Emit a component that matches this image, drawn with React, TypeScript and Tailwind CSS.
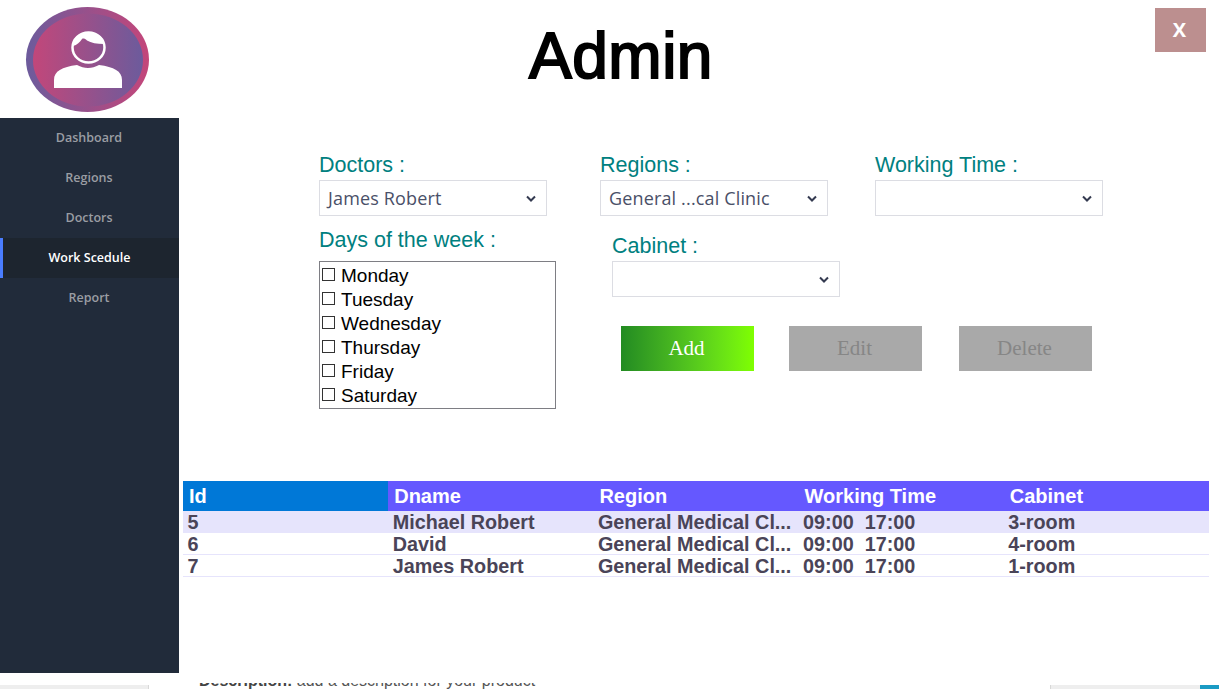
function Logo() {
    return (
        <svg width="179" height="118" viewBox="0 0 179 118" className="block">
            <defs>
                <linearGradient id="logoOuter" x1="0" x2="1" y1="0" y2="0">
                    <stop offset="0" stopColor="#6c5b9c" />
                    <stop offset="1" stopColor="#c4467a" />
                </linearGradient>
                <linearGradient id="logoInner" x1="0" x2="1" y1="0" y2="0">
                    <stop offset="0" stopColor="#c2477a" />
                    <stop offset="1" stopColor="#6c5b9c" />
                </linearGradient>
            </defs>
            <ellipse cx="87.5" cy="59.5" rx="61.5" ry="52.5" fill="url(#logoOuter)" />
            <ellipse cx="88" cy="60" rx="55" ry="46.5" fill="url(#logoInner)" />
            <ellipse cx="88.5" cy="47.5" rx="16" ry="15" fill="none" stroke="#fff" strokeWidth="2.5" />
            <path d="M73 46C73 37 80 32 88.5 32S104 37 104 44C97 44 91 43 87 40.5 85 38.5 83 38 82 39 80 42 77 45 73 46z" fill="#fff" />
            <path d="M54 88V80C54 71 62 67 77 65 81 67 84 68 88 68S95 67 99 65C114 67 122 71 122 80V88z" fill="#fff" />
        </svg>
    );
}

function Chevron() {
    return (
        <svg width="10" height="7" viewBox="0 0 10 7" className="shrink-0">
            <path d="M1 1.5 5 5.5 9 1.5" fill="none" stroke="#343a50" strokeWidth="2" />
        </svg>
    );
}

function Field({ label, value }: { label: string; value?: string }) {
    return (
        <div className="w-[228px]">
            <div className="h-[27px] text-[21.5px] leading-[24px] text-[#008080] font-['Liberation_Sans',sans-serif] whitespace-nowrap">
                {label}
            </div>
            <div className="h-[36px] border border-[#dcdde3] bg-white pl-[8px] pr-[10px] flex items-center justify-between">
                <span className="text-[18px] text-[#4a5068] font-['Open_Sans',sans-serif] tracking-[0.15px]">
                    {value}
                </span>
                <Chevron />
            </div>
        </div>
    );
}

function NavItem({ label, active }: { label: string; active?: boolean }) {
    return (
        <div
            className={
                active
                    ? "h-[40px] flex items-center justify-center border-l-[3px] border-[#4a7dff] bg-[#1d252f] text-white text-[12.5px] font-semibold pr-[3px]"
                    : "h-[40px] flex items-center justify-center text-[#9a9da3] text-[12.5px] font-semibold pr-[1px]"
            }
        >
            {label}
        </div>
    );
}

const days = ["Monday", "Tuesday", "Wednesday", "Thursday", "Friday", "Saturday"];

const rows = [
    { id: "5", name: "Michael Robert", cabinet: "3-room" },
    { id: "6", name: "David", cabinet: "4-room" },
    { id: "7", name: "James Robert", cabinet: "1-room" },
];

function Cell({ children }: { children: React.ReactNode }) {
    return <div className="w-[205.2px] pl-[4.5px] pt-[1px] truncate">{children}</div>;
}

export default function App() {
    return (
        <div className="w-[1219px] h-[689px] overflow-hidden bg-white flex flex-col font-['Liberation_Sans',sans-serif]">
            <div className="h-[673px] flex">
                <div className="w-[179px] flex flex-col shrink-0">
                    <Logo />
                    <div className="flex-1 bg-[#212b3a] font-['Open_Sans',sans-serif]">
                        <NavItem label="Dashboard" />
                        <NavItem label="Regions" />
                        <NavItem label="Doctors" />
                        <NavItem label="Work Scedule" active />
                        <NavItem label="Report" />
                    </div>
                </div>

                <div className="flex-1 flex flex-col">
                    <div className="h-[118px] flex items-start relative">
                        <h1 className="w-[884px] pt-[18px] text-center text-[64px] leading-[77px] tracking-[0.5px] text-black font-normal [-webkit-text-stroke:2px_black]">
                            Admin
                        </h1>
                        <button className="absolute right-[13px] top-[8px] w-[51px] h-[44px] pr-[2px] bg-[#bc8f8f] text-white font-bold text-[20px] font-['Open_Sans',sans-serif]">
                            X
                        </button>
                    </div>

                    <div className="h-[363px] pl-[140px] pt-[35px] flex">
                        <div className="w-[281px] shrink-0">
                            <Field label="Doctors :" value="James Robert" />
                            <div className="mt-[12px] h-[33px] text-[21.5px] leading-[24px] text-[#008080]">
                                Days of the week :
                            </div>
                            <div className="w-[237px] h-[148px] border border-[#7e7e84] pt-[2px] pl-[1px]">
                                {days.map((d) => (
                                    <div key={d} className="h-[24px] flex items-center text-[19px] text-black">
                                        <span className="w-[13px] h-[13px] border border-[#333] ml-[1px] mr-[6px] -mt-[3px]" />
                                        <span className="mt-[1px]">{d}</span>
                                    </div>
                                ))}
                            </div>
                        </div>
                        <div>
                            <div className="flex gap-[47px]">
                                <Field label="Regions :" value="General ...cal Clinic" />
                                <Field label="Working Time :" />
                            </div>
                            <div className="ml-[12px] mt-[18px]">
                                <Field label="Cabinet :" />
                            </div>
                            <div className="ml-[21px] mt-[29px] flex font-['Liberation_Serif',serif] text-[21px]">
                                <div className="w-[133px] h-[45px] pr-[2px] flex items-center justify-center text-white bg-gradient-to-r from-[#228b22] to-[#7fff00]">
                                    Add
                                </div>
                                <div className="ml-[35px] w-[133px] h-[45px] pr-[2px] flex items-center justify-center text-[#868686] bg-[#a9a9a9]">
                                    Edit
                                </div>
                                <div className="ml-[37px] w-[133px] h-[45px] pr-[2px] flex items-center justify-center text-[#868686] bg-[#a9a9a9]">
                                    Delete
                                </div>
                            </div>
                        </div>
                    </div>

                    <div className="ml-[4px] w-[1026px] font-bold text-[20px]">
                        <div className="h-[30px] flex items-center text-white bg-[#6558ff]">
                            <div className="w-[205.2px] h-full pl-[6px] flex items-center bg-[#0078d7]">Id</div>
                            <div className="w-[205.2px] pl-[6px]">Dname</div>
                            <div className="w-[205.2px] pl-[6px]">Region</div>
                            <div className="w-[205.2px] pl-[6px]">Working Time</div>
                            <div className="w-[205.2px] pl-[6px]">Cabinet</div>
                        </div>
                        {rows.map((r, i) => (
                            <div
                                key={r.id}
                                className={
                                    i === 0
                                        ? "h-[22px] flex items-center text-[19.8px] text-[#4a4458] bg-[#e6e4fc]"
                                        : "h-[22px] pt-[1px] flex items-center text-[19.8px] text-[#4a4458] border-b border-[#e6e4fc]"
                                }
                            >
                                <Cell>{r.id}</Cell>
                                <Cell>{r.name}</Cell>
                                <Cell>General Medical Cl...</Cell>
                                <Cell>09:00&nbsp; 17:00</Cell>
                                <Cell>{r.cabinet}</Cell>
                            </div>
                        ))}
                    </div>
                </div>
            </div>

            <div className="h-[16px] flex items-end overflow-hidden">
                <div className="w-[149px] h-[4px] bg-[#eeeeee] border-r border-[#d8d8d8]" />
                <div className="flex-1 h-[6px] pl-[50px] overflow-hidden">
                    <div className="-mt-[10px] text-[16px] leading-[16px] text-[#555] whitespace-nowrap">
                        <b className="text-[#444]">Description:</b> add a description for your product
                    </div>
                </div>
                <div className="w-[169px] h-[4px] bg-[#eeeeee] flex justify-end border-l border-[#d8d8d8]">
                    <div className="w-[19px] h-[4px] bg-[#1a9bc4]" />
                </div>
            </div>
        </div>
    );
}
